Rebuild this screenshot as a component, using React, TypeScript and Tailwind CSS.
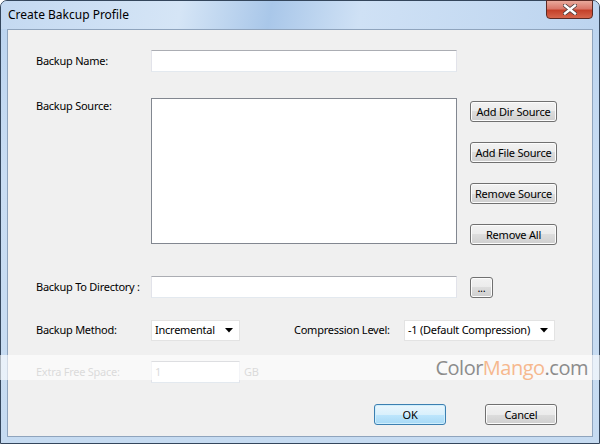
import React from "react";

const font = { fontFamily: '"Noto Sans", "Open Sans", sans-serif' };

function WinButton({ label, className = "", primary = false }: { label: string; className?: string; primary?: boolean }) {
  return (
    <button
      className={
        "h-[21px] rounded-[3px] border text-[11px] leading-none text-black tracking-[-0.2px] " +
        (primary
          ? "border-[#3c7fb1] bg-[linear-gradient(to_bottom,#eaf6fd_0%,#d9f0fc_50%,#bee6fd_50%,#a7d9f5_100%)] shadow-[inset_0_0_0_1px_#cfeefc] "
          : "border-[#707070] bg-[linear-gradient(to_bottom,#f2f2f2_0%,#ebebeb_50%,#dddddd_50%,#cfcfcf_100%)] shadow-[inset_0_0_0_1px_#fcfcfc] ") +
        className
      }
    >
      {label}
    </button>
  );
}

function TextBox({ className = "", children }: { className?: string; children?: React.ReactNode }) {
  return (
    <div
      className={
        "h-[22px] border border-t-[#abadb3] border-x-[#e2e3ea] border-b-[#e3e9ef] bg-white px-[3px] text-[11px] flex items-center " +
        className
      }
    >
      {children}
    </div>
  );
}

function Combo({ value, className = "" }: { value: string; className?: string }) {
  return (
    <div className={"h-[21px] border border-[#e3e3e3] bg-white flex items-center justify-between pl-[3px] pr-[6px] text-[11px] text-black " + className}>
      <span>{value}</span>
      <svg width="8" height="5" viewBox="0 0 8 5">
        <path d="M0 0H8L4 4.5Z" fill="#000" />
      </svg>
    </div>
  );
}

export default function App() {
  return (
    <div style={font} className="relative w-[600px] h-[444px] overflow-hidden">
      <div className="w-full h-full flex flex-col rounded-t-[7px] border border-[#34465c] bg-[linear-gradient(to_bottom,#bad3ef,#c9ddf3_40%,#c6dbf1)]">
        {/* title bar */}
        <div className="relative h-[28px] flex items-center pl-[7px] bg-[linear-gradient(100deg,#c4d9f1_0%,#d5e5f6_30%,#a9c7e9_45%,#cfe1f5_60%,#bcd4ef_100%)] rounded-t-[6px]">
          <span className="text-[12px] text-black">Create Bakcup Profile</span>
          <div className="absolute right-[6px] top-[-1px] w-[47px] h-[19px] rounded-b-[4px] border border-[#5b2a24] bg-[linear-gradient(to_bottom,#e9a99b_0%,#d9786a_45%,#c4412a_55%,#d6664c_100%)] flex items-center justify-center">
            <svg width="14" height="11" viewBox="0 0 14 11">
              <path d="M2 1.5L12 9.5M12 1.5L2 9.5" stroke="#4a3a3a" strokeWidth="4" strokeLinecap="square" />
              <path d="M2 1.5L12 9.5M12 1.5L2 9.5" stroke="#fff" strokeWidth="2.4" strokeLinecap="square" />
            </svg>
          </div>
        </div>

        {/* client area */}
        <div className="mx-[6px] mb-[6px] h-[408px] border border-[#8fa4bd] bg-[#f0f0f0] pl-[28px] text-[11px] tracking-[-0.25px] text-black flex flex-col">
          <div className="mt-[20px] flex items-center">
            <span className="w-[115px]">Backup Name:</span>
            <TextBox className="w-[306px]" />
          </div>

          <div className="mt-[26px] flex">
            <span className="w-[115px] leading-[13px] pt-[1px]">Backup Source:</span>
            <div className="w-[306px] h-[146px] border border-[#828790] bg-white" />
            <div className="ml-[13px] pt-[3px] flex flex-col gap-[20px]">
              <WinButton label="Add Dir Source" className="w-[87px]" />
              <WinButton label="Add File Source" className="w-[87px]" />
              <WinButton label="Remove Source" className="w-[87px]" />
              <WinButton label="Remove All" className="w-[87px]" />
            </div>
          </div>

          <div className="mt-[31px] flex items-center">
            <span className="w-[115px]">Backup To Directory&nbsp;:</span>
            <TextBox className="w-[306px]" />
            <WinButton label="..." className="ml-[13px] w-[23px]" />
          </div>

          <div className="mt-[21px] h-[22px] flex items-center">
            <span className="w-[115px]">Backup Method:</span>
            <Combo value="Incremental" className="w-[89px]" />
            <span className="ml-[54px] w-[110px]">Compression Level:</span>
            <Combo value="-1 (Default Compression)" className="w-[151px]" />
          </div>

          <div className="mt-[20px] flex items-center text-[#a3a3a3]">
            <span className="w-[115px]">Extra Free Space:</span>
            <TextBox className="w-[89px] border-[#e6e6e6] text-[#a3a3a3]">1</TextBox>
            <span className="ml-[4px]">GB</span>
          </div>

          <div className="mt-[21px] flex">
            <WinButton label="OK" primary className="ml-[338px] w-[72px]" />
            <WinButton label="Cancel" className="ml-[39px] w-[72px]" />
          </div>
        </div>
      </div>

      {/* watermark */}
      <div className="absolute left-0 top-[355px] w-full h-[25px] bg-white/60 flex items-center justify-end pr-[12px]">
        <span className="text-[20px] leading-none tracking-[-0.5px]" style={{ fontFamily: '"Open Sans", sans-serif' }}>
          <span className="text-[#8c8c8c]">Color</span>
          <span className="text-[#f6b88e]">Mango</span>
          <span className="text-[#8c8c8c]">.com</span>
        </span>
      </div>
    </div>
  );
}
